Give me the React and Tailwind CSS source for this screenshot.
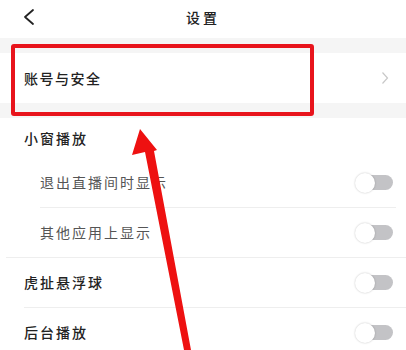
import React from "react";

const font = { fontFamily: '"Noto Sans CJK SC", "Noto Sans", sans-serif' };

const Toggle = () => (
  <div className="relative w-[38px] h-[20px] flex items-center">
    <div className="ml-[8px] w-[30px] h-[15px] rounded-full bg-[#c3c3c6]" />
    <div className="absolute left-0 top-0 w-[20px] h-[20px] rounded-full bg-white shadow-[0_0_2px_rgba(0,0,0,0.25)]" />
  </div>
);

const Row = ({ label, sub }) => (
  <div
    className={`flex items-center justify-between h-[49px] pr-[13px] ${sub ? "pl-[40px]" : "pl-[24px]"}`}
  >
    <span
      className={`text-[14px] tracking-[2px] ${sub ? "text-[#555]" : "text-[#222] font-medium"}`}
    >
      {label}
    </span>
    <Toggle />
  </div>
);

export default function App() {
  return (
    <div className="relative w-[406px] h-[350px] overflow-hidden bg-white" style={font}>
      {/* header */}
      <div className="grid grid-cols-[1fr_auto_1fr] items-center h-[38px] px-[22px] pb-[4px]">
        <svg width="14" height="18" viewBox="0 0 14 18">
          <path d="M11 2 L3 9 L11 16" fill="none" stroke="#222" strokeWidth="1.8" strokeLinecap="round" strokeLinejoin="round" />
        </svg>
        <span className="text-[14px] tracking-[3px] text-[#222] font-medium">设置</span>
        <span />
      </div>

      <div className="h-[15px] bg-[#f5f5f5]" />

      <div className="flex items-center justify-between h-[50px] pl-[24px] pr-[17px]">
        <span className="text-[14px] tracking-[1.5px] text-[#222] font-medium">账号与安全</span>
        <svg width="8" height="14" viewBox="0 0 8 14">
          <path d="M1.5 1.5 L6.5 7 L1.5 12.5" fill="none" stroke="#c8c8c8" strokeWidth="1.2" />
        </svg>
      </div>

      <div className="h-[15px] bg-[#f5f5f5]" />

      <div className="flex items-center h-[40px] pl-[24px]">
        <span className="text-[14px] tracking-[2px] text-[#222] font-medium">小窗播放</span>
      </div>

      <Row label="退出直播间时显示" sub />
      <div className="ml-[40px] mr-[10px] h-px bg-[#eeeeee]" />
      <Row label="其他应用上显示" sub />
      <div className="ml-[6px] h-px bg-[#eeeeee]" />
      <Row label="虎扯悬浮球" />
      <div className="ml-[24px] h-px bg-[#eeeeee]" />
      <Row label="后台播放" />

      {/* annotation overlay */}
      <div className="absolute left-[11px] top-[44px] w-[303px] h-[72px] border-[4px] border-[#e8141c] rounded-[3px]" />
      <svg className="absolute left-0 top-0" width="406" height="350" viewBox="0 0 406 350">
        <polygon points="140,129 157,150 154,151 191,350 184,350 145,152 132,155" fill="#ee1111" />
      </svg>
    </div>
  );
}
